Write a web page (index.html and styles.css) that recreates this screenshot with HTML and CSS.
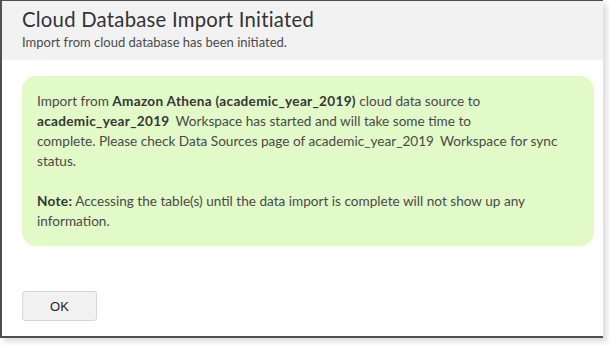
FILE: index.html
```html
<!DOCTYPE html>
<html>
<head>
<meta charset="utf-8">
<link rel="stylesheet" href="styles.css">
</head>
<body>
<div class="dialog">
  <div class="header">
    <h1 class="title">Cloud Database Import Initiated</h1>
    <p class="subtitle">Import from cloud database has been initiated.</p>
  </div>
  <div class="body">
    <div class="notice">
      <p class="para">Import from <b>Amazon Athena (academic_year_2019)</b> cloud data source to<br><b class="ws">academic_year_2019</b>Workspace has started and will take some time to<br>complete. Please check Data Sources page of <span class="ws">academic_year_2019</span>Workspace for sync<br>status.</p>
      <p class="para"><b>Note:</b> Accessing the table(s) until the data import is complete will not show up any<br>information.</p>
    </div>
  </div>
  <div class="footer">
    <button class="btn">OK</button>
  </div>
</div>
</body>
</html>
```
FILE: styles.css
```css
html, body {
  margin: 0;
  padding: 0;
  background: #ffffff;
}
body {
  width: 610px;
  height: 349px;
  overflow: hidden;
  font-family: "Lato", "Liberation Sans", sans-serif;
}
.dialog {
  width: 601px;
  height: 335px;
  border-left: 2px solid #4f4f52;
  border-top: 1px solid #4f4f52;
  border-bottom: 2px solid #4f4f52;
  background: #ffffff;
  box-shadow: 4px 4px 5px rgba(0, 0, 0, 0.13);
  display: flex;
  flex-direction: column;
}
.header {
  background: #f2f2f2;
  height: 59px;
  padding: 0 20px;
  box-sizing: border-box;
  padding-top: 5px;
}
.title {
  margin: 0;
  font-size: 20.3px;
  font-weight: 400;
  letter-spacing: 0.25px;
  color: #333333;
  line-height: 26px;
}
.subtitle {
  margin: 2px 0 0;
  font-size: 13px;
  color: #4a4a4a;
  line-height: 16px;
}
.body {
  padding: 16px 9px 0 20px;
}
.notice {
  background: #e2f9c8;
  border-radius: 14px;
  padding: 15px 15px 15px 15px;
}
.para {
  margin: 0;
  font-size: 13.6px;
  line-height: 20px;
  color: #4a4a4a;
}
.para + .para {
  margin-top: 20px;
}
.para b {
  font-weight: 700;
  letter-spacing: 0.3px;
  color: #363636;
}
.ws {
  margin-right: 6px;
}
.footer {
  padding: 45px 20px 0;
}
.btn {
  width: 75px;
  height: 30px;
  background: #f1f1f1;
  border: 1px solid #d6d6d6;
  border-radius: 3px;
  font-family: "Liberation Sans", Arial, sans-serif;
  font-size: 13px;
  color: #222222;
  padding: 0;
}
```
